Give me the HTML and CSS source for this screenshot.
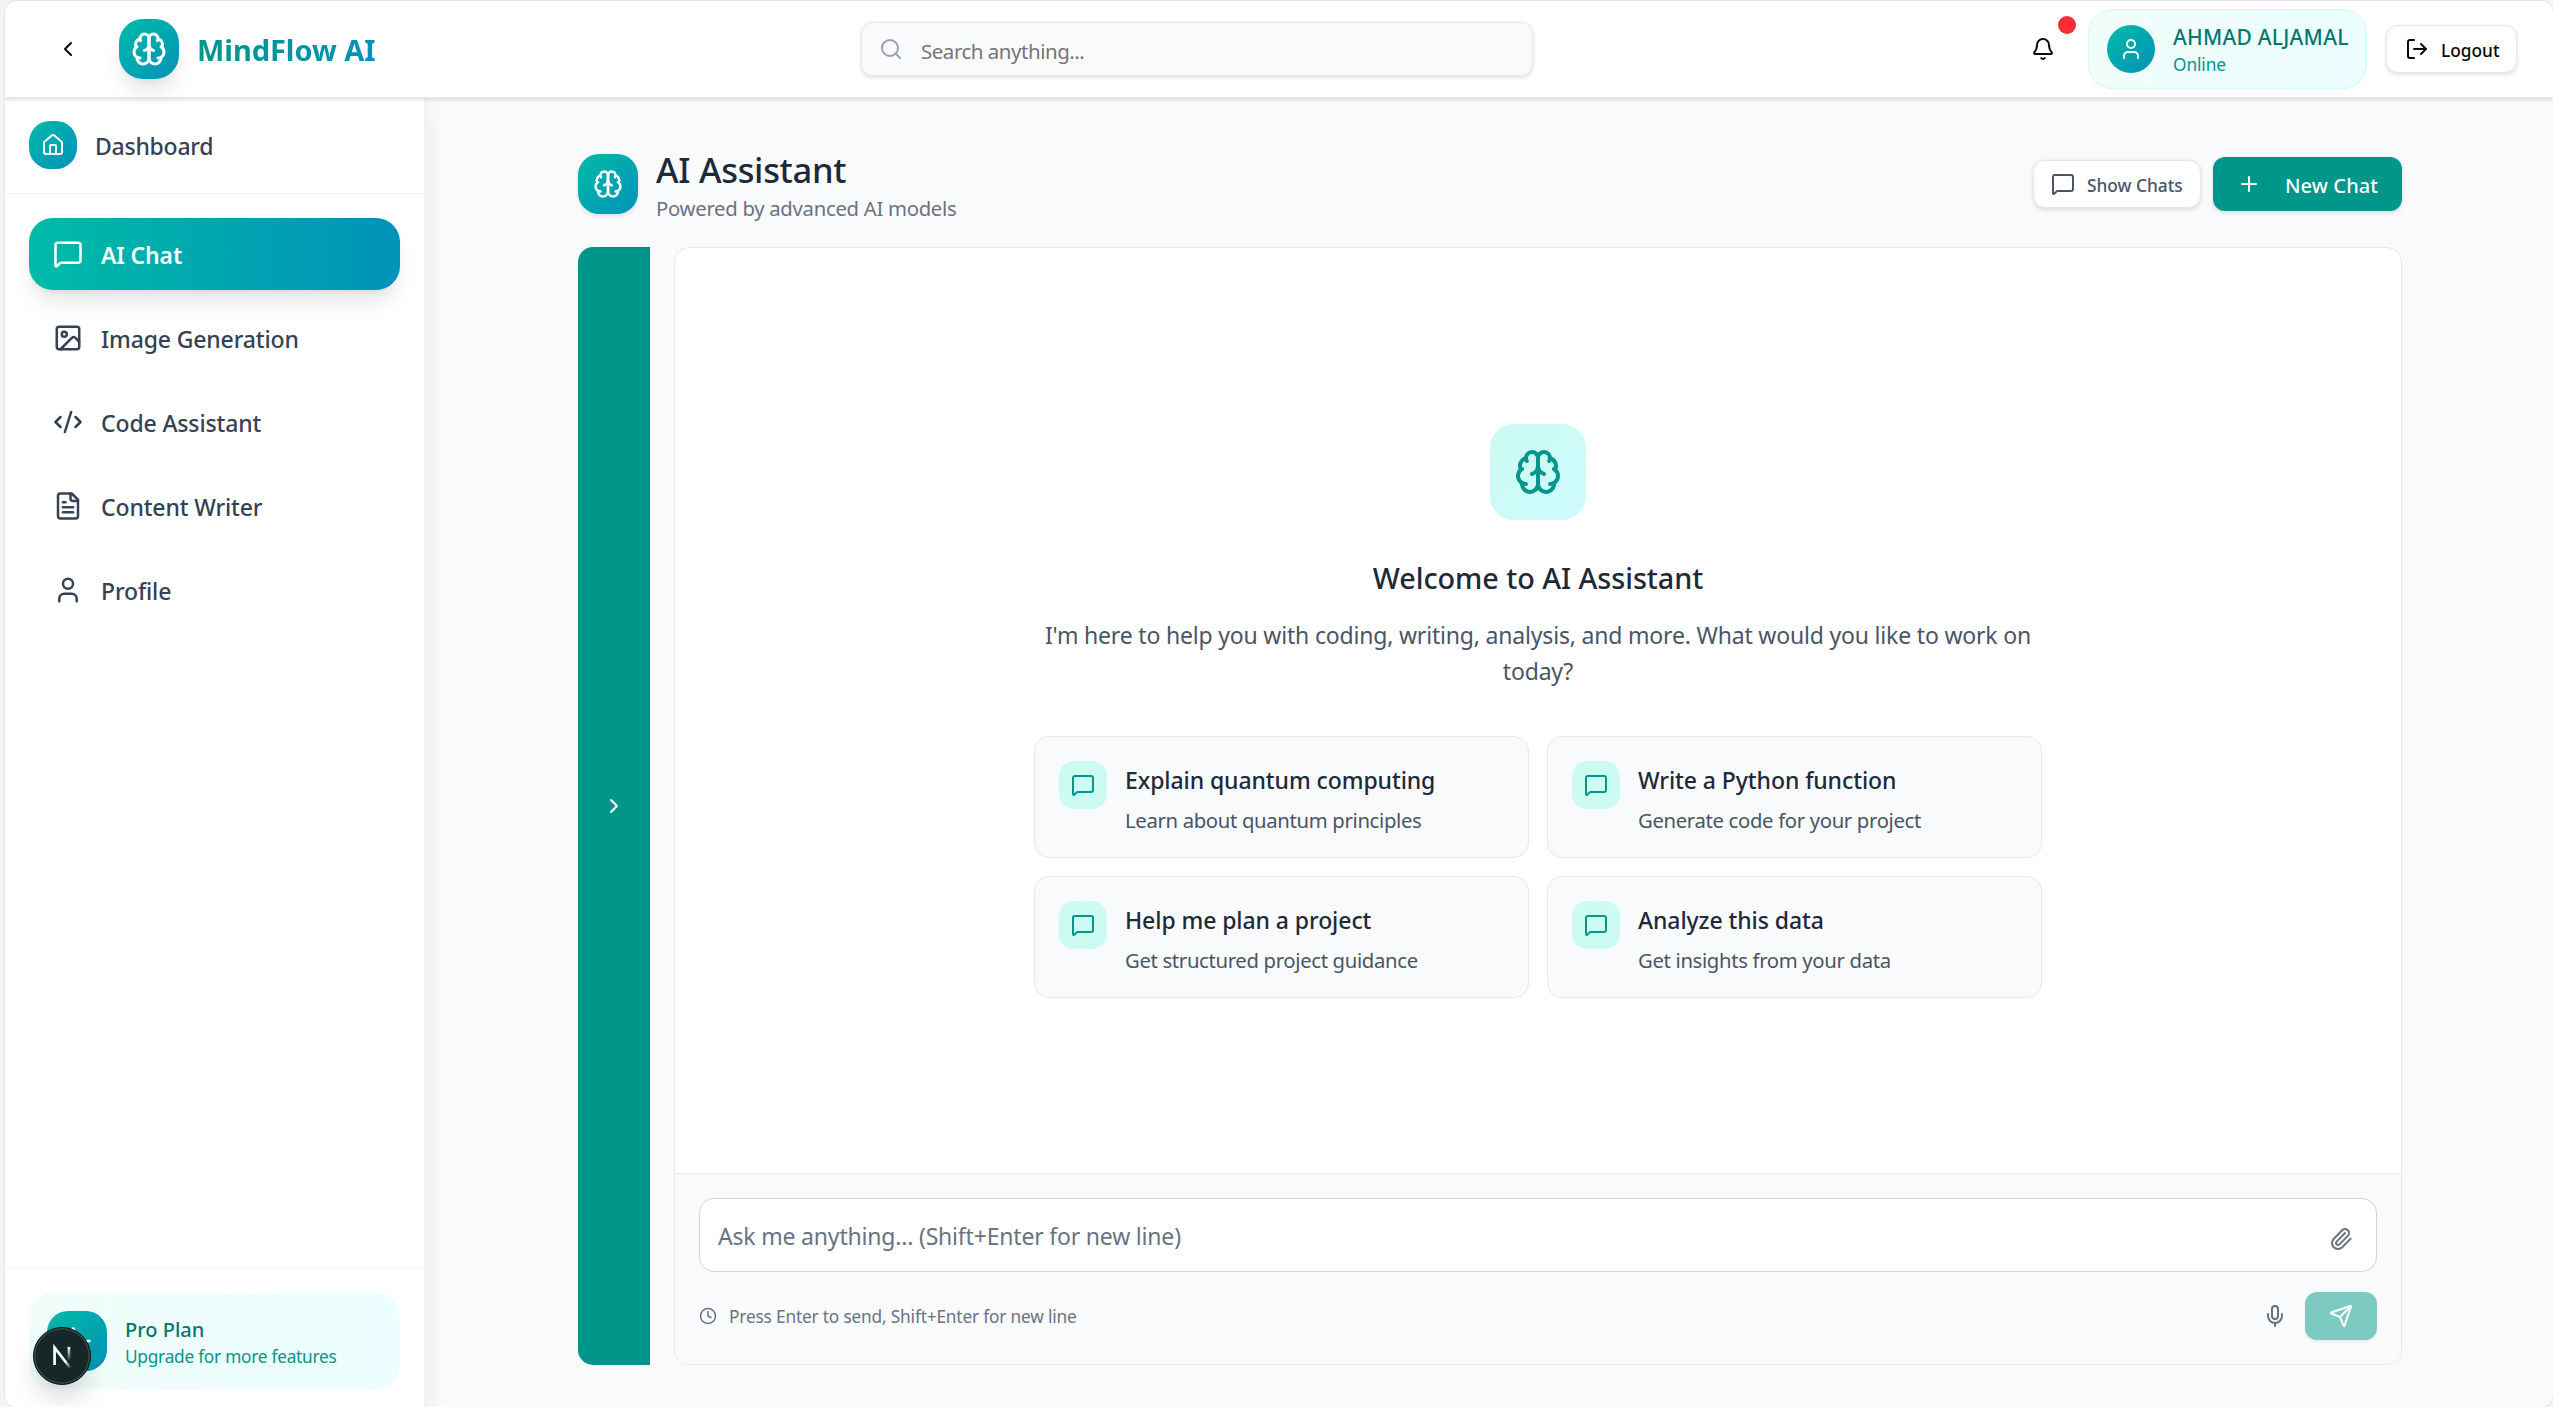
FILE: index.html
```html
<!DOCTYPE html>
<html lang="en">
<head>
<meta charset="utf-8">
<title>MindFlow AI</title>
<link rel="stylesheet" href="styles.css">
</head>
<body>
<svg class="sprite" aria-hidden="true">
  <symbol id="brain" viewBox="0 0 24 24"><path d="M12 5a3 3 0 1 0-5.997.125 4 4 0 0 0-2.526 5.77 4 4 0 0 0 .556 6.588A4 4 0 1 0 12 18Z"/><path d="M12 5a3 3 0 1 1 5.997.125 4 4 0 0 1 2.526 5.77 4 4 0 0 1-.556 6.588A4 4 0 1 1 12 18Z"/><path d="M15 13a4.5 4.5 0 0 1-3-4 4.5 4.5 0 0 1-3 4"/><path d="M17.599 6.5a3 3 0 0 0 .399-1.375"/><path d="M6.003 5.125A3 3 0 0 0 6.401 6.5"/><path d="M3.477 10.896a4 4 0 0 1 .585-.396"/><path d="M19.938 10.5a4 4 0 0 1 .585.396"/><path d="M6 18a4 4 0 0 1-1.967-.516"/><path d="M19.967 17.484A4 4 0 0 1 18 18"/></symbol>
  <symbol id="message" viewBox="0 0 24 24"><path d="M22 17a2 2 0 0 1-2 2H6.828a2 2 0 0 0-1.414.586l-2.202 2.202A.71.71 0 0 1 2 21.286V5a2 2 0 0 1 2-2h16a2 2 0 0 1 2 2z"/></symbol>
  <symbol id="user" viewBox="0 0 24 24"><path d="M19 21v-2a4 4 0 0 0-4-4H9a4 4 0 0 0-4 4v2"/><circle cx="12" cy="7" r="4"/></symbol>
</svg>
<div class="window">
  <header class="topbar">
    <div class="brand">
      <button class="back"><svg class="icon" viewBox="0 0 24 24"><path d="m15 18-6-6 6-6"/></svg></button>
      <span class="logo logo-raised"><svg class="icon icon-xl"><use href="#brain"/></svg></span>
      <span class="brand-name">MindFlow AI</span>
    </div>
    <div class="search">
      <svg class="icon" viewBox="0 0 24 24"><path d="m21 21-4.34-4.34"/><circle cx="11" cy="11" r="8"/></svg>
      <span class="search-text">Search anything...</span>
    </div>
    <div class="account">
      <span class="bell"><svg class="icon" viewBox="0 0 24 24"><path d="M10.268 21a2 2 0 0 0 3.464 0"/><path d="M3.262 15.326A1 1 0 0 0 4 17h16a1 1 0 0 0 .74-1.673C19.41 13.956 18 12.499 18 8A6 6 0 0 0 6 8c0 4.499-1.411 5.956-2.738 7.326"/></svg><i class="dot"></i></span>
      <div class="chip">
        <span class="avatar"><svg class="icon"><use href="#user"/></svg></span>
        <div class="chip-text"><div class="chip-name">AHMAD ALJAMAL</div><div class="chip-status">Online</div></div>
      </div>
      <button class="outline-btn logout"><svg class="icon" viewBox="0 0 24 24"><path d="m16 17 5-5-5-5"/><path d="M21 12H9"/><path d="M9 21H5a2 2 0 0 1-2-2V5a2 2 0 0 1 2-2h4"/></svg><span class="button-label">Logout</span></button>
    </div>
  </header>
  <div class="body">
    <aside class="sidebar">
      <div class="home">
        <span class="home-icon"><svg class="icon" viewBox="0 0 24 24"><path d="M15 21v-8a1 1 0 0 0-1-1h-4a1 1 0 0 0-1 1v8"/><path d="M3 10a2 2 0 0 1 .709-1.528l7-5.999a2 2 0 0 1 2.582 0l7 5.999A2 2 0 0 1 21 10v9a2 2 0 0 1-2 2H5a2 2 0 0 1-2-2z"/></svg></span>
        <span class="label">Dashboard</span>
      </div>
      <nav class="nav">
        <a class="nav-item active"><svg class="icon icon-lg"><use href="#message"/></svg><span class="label">AI Chat</span></a>
        <a class="nav-item"><svg class="icon icon-lg" viewBox="0 0 24 24"><rect width="18" height="18" x="3" y="3" rx="2"/><circle cx="9" cy="9" r="2"/><path d="m21 15-3.086-3.086a2 2 0 0 0-2.828 0L6 21"/></svg><span class="label">Image Generation</span></a>
        <a class="nav-item"><svg class="icon icon-lg" viewBox="0 0 24 24"><path d="m18 16 4-4-4-4"/><path d="m6 8-4 4 4 4"/><path d="m14.5 4-5 16"/></svg><span class="label">Code Assistant</span></a>
        <a class="nav-item"><svg class="icon icon-lg" viewBox="0 0 24 24"><path d="M15 2H6a2 2 0 0 0-2 2v16a2 2 0 0 0 2 2h12a2 2 0 0 0 2-2V7Z"/><path d="M14 2v4a2 2 0 0 0 2 2h4"/><path d="M10 9H8"/><path d="M16 13H8"/><path d="M16 17H8"/></svg><span class="label">Content Writer</span></a>
        <a class="nav-item"><svg class="icon icon-lg"><use href="#user"/></svg><span class="label">Profile</span></a>
      </nav>
      <div class="plan-area">
        <div class="plan">
          <span class="logo"><svg class="icon icon-lg" viewBox="0 0 24 24"><path d="M22 12h-2.48a2 2 0 0 0-1.93 1.46l-2.35 8.36a.25.25 0 0 1-.48 0L9.24 2.18a.25.25 0 0 0-.48 0l-2.35 8.36A2 2 0 0 1 4.49 12H2"/></svg></span>
          <div class="plan-text"><div class="plan-name">Pro Plan</div><div class="plan-note">Upgrade for more features</div></div>
        </div>
      </div>
    </aside>
    <main class="main">
      <div class="page-head">
        <span class="logo logo-flat"><svg class="icon icon-lg"><use href="#brain"/></svg></span>
        <div class="titles"><h1>AI Assistant</h1><p>Powered by advanced AI models</p></div>
        <button class="outline-btn show"><svg class="icon"><use href="#message"/></svg><span class="button-label">Show Chats</span></button>
        <button class="new"><svg class="icon" viewBox="0 0 24 24"><path d="M5 12h14"/><path d="M12 5v14"/></svg><span class="button-label">New Chat</span></button>
      </div>
      <div class="workspace">
        <div class="drawer"><svg class="icon" viewBox="0 0 24 24"><path d="m9 18 6-6-6-6"/></svg></div>
        <section class="chat">
          <div class="welcome">
            <span class="hero"><svg class="icon icon-2xl"><use href="#brain"/></svg></span>
            <h2>Welcome to AI Assistant</h2>
            <p class="intro">I'm here to help you with coding, writing, analysis, and more. What would you like to work on<br>today?</p>
            <div class="prompts">
              <div class="prompt"><span class="prompt-icon"><svg class="icon"><use href="#message"/></svg></span><div class="prompt-text"><h3>Explain quantum computing</h3><p>Learn about quantum principles</p></div></div>
              <div class="prompt"><span class="prompt-icon"><svg class="icon"><use href="#message"/></svg></span><div class="prompt-text"><h3>Write a Python function</h3><p>Generate code for your project</p></div></div>
              <div class="prompt"><span class="prompt-icon"><svg class="icon"><use href="#message"/></svg></span><div class="prompt-text"><h3>Help me plan a project</h3><p>Get structured project guidance</p></div></div>
              <div class="prompt"><span class="prompt-icon"><svg class="icon"><use href="#message"/></svg></span><div class="prompt-text"><h3>Analyze this data</h3><p>Get insights from your data</p></div></div>
            </div>
          </div>
          <div class="composer">
            <div class="field"><span class="field-text">Ask me anything... (Shift+Enter for new line)</span>
              <svg class="icon clip" viewBox="0 0 24 24"><path d="m16 6-8.414 8.586a2 2 0 0 0 2.829 2.829l8.414-8.586a4 4 0 1 0-5.657-5.657l-8.379 8.551a6 6 0 1 0 8.485 8.485l8.379-8.551"/></svg></div>
            <div class="actions">
              <svg class="icon icon-sm" viewBox="0 0 24 24"><circle cx="12" cy="12" r="10"/><path d="M12 6v6l4 2"/></svg>
              <span class="hint">Press Enter to send, Shift+Enter for new line</span>
              <svg class="icon mic" viewBox="0 0 24 24"><path d="M12 19v3"/><path d="M19 10v2a7 7 0 0 1-14 0v-2"/><rect x="9" y="2" width="6" height="13" rx="3"/></svg>
              <button class="send"><svg class="icon" viewBox="0 0 24 24"><path d="M14.536 21.686a.5.5 0 0 0 .937-.024l6.5-19a.496.496 0 0 0-.635-.635l-19 6.5a.5.5 0 0 0-.024.937l7.93 3.18a2 2 0 0 1 1.112 1.11z"/><path d="m21.854 2.147-10.94 10.939"/></svg></button>
            </div>
          </div>
        </section>
      </div>
    </main>
  </div>
  <div class="dev-badge"><svg viewBox="0 0 40 40"><defs><linearGradient id="fadeA" gradientUnits="userSpaceOnUse" x1="13" y1="13" x2="26" y2="29"><stop offset=".7" stop-color="#fff"/><stop offset="1" stop-color="#fff" stop-opacity="0"/></linearGradient><linearGradient id="fadeB" x1="0" y1="0" x2="0" y2="1"><stop offset="0" stop-color="#fff"/><stop offset="1" stop-color="#fff" stop-opacity="0"/></linearGradient></defs><path d="M14.7 26.5V14L26 28.6" fill="none" stroke="url(#fadeA)" stroke-width="1.9"/><rect x="24" y="13.5" width="1.9" height="10" fill="url(#fadeB)"/></svg></div>
</div>
</body>
</html>
```
FILE: styles.css
```css
* { box-sizing: border-box; margin: 0; padding: 0; }
body { background: #f4f4f5; font-family: "Noto Sans", "Open Sans", sans-serif; font-size: 23px; line-height: 36px; color: #364153; overflow: hidden; }
button { font: inherit; border: 0; background: none; }
h1, h2, h3 { font-weight: 500; color: #1e2939; }
.sprite { display: none; }
.icon { width: 24px; height: 24px; flex: none; fill: none; stroke: currentColor; stroke-width: 2; stroke-linecap: round; stroke-linejoin: round; }
.icon-sm { width: 18px; height: 18px; }
.icon-lg { width: 30px; height: 30px; }
.icon-xl { width: 36px; height: 36px; }
.icon-2xl { width: 48px; height: 48px; }

.window { position: relative; display: flex; flex-direction: column; height: 1406px; margin: 1px 0 0 5px; background: #f9fafb; border-radius: 12px; overflow: hidden; box-shadow: 0 0 0 1px #e4e4e6; }

.topbar { position: relative; z-index: 2; display: grid; grid-template-columns: 856px 672px 1fr; align-items: center; height: 97px; background: #fff; border-bottom: 1px solid #e5e7eb; box-shadow: 0 1.5px 4px rgba(0,0,0,.12); }
.brand { display: flex; align-items: center; padding-left: 51px; }
.back { display: flex; color: #0a0a0a; margin-right: 39px; }
.logo { display: grid; place-items: center; flex: none; width: 60px; height: 60px; border-radius: 21px; color: #fff; background: linear-gradient(135deg, #00bba7, #0092b8); }
.logo-raised { border-radius: 24px; box-shadow: 0 15px 22px -4px rgba(0,0,0,.1), 0 6px 9px -6px rgba(0,0,0,.1); }
.logo-flat { box-shadow: 0 1.5px 4px rgba(0,0,0,.12); }
.brand-name { margin-left: 18px; padding-top: 2px; font-size: 29px; font-weight: 700; letter-spacing: -.06px; background: linear-gradient(90deg, #009689, #0092b8); background-clip: text; -webkit-background-clip: text; color: transparent; }
.search { display: flex; align-items: center; gap: 18px; height: 54px; padding: 0 17px; background: #f9fafb; border: 1px solid #e5e7eb; border-radius: 12px; box-shadow: 0 1.5px 4px rgba(0,0,0,.12); color: #99a1af; font-size: 20.5px; }
.search-text { padding-top: 3px; color: #757575; letter-spacing: -.48px; }
.account { display: flex; align-items: center; justify-content: flex-end; padding-right: 36px; }
.bell { position: relative; display: flex; margin-right: 33px; color: #0a0a0a; }
.dot { position: absolute; left: 27px; top: -21px; width: 18px; height: 18px; border-radius: 50%; background: #fb2c36; }
.chip { display: flex; align-items: center; gap: 18px; width: 279px; height: 80px; padding-left: 18px; margin-right: 19px; border: 1px solid #cbfbf1; border-radius: 24px; background: linear-gradient(90deg, #f0fdfa, #ecfeff); }
.avatar { display: grid; place-items: center; width: 48px; height: 48px; border-radius: 50%; color: #fff; background: linear-gradient(135deg, #00bba7, #0092b8); }
.chip-text { padding-top: 4px; white-space: nowrap; }
.chip-name { font-size: 21px; line-height: 27px; font-weight: 500; letter-spacing: .25px; color: #00786f; }
.chip-status { font-size: 17.3px; line-height: 28px; letter-spacing: -.1px; color: #009689; }
.outline-btn { display: flex; align-items: center; height: 48px; border: 1px solid #e5e7eb; border-radius: 12px; background: #fff; box-shadow: 0 1.5px 4px rgba(0,0,0,.12); font-size: 17.3px; font-weight: 500; white-space: nowrap; }
.logout { width: 131px; padding-left: 18px; gap: 12px; color: #0a0a0a; }
.button-label { padding-top: 3px; }

.body { display: flex; flex: 1; min-height: 0; margin-top: -1px; }
.sidebar { display: flex; flex-direction: column; width: 420px; flex: none; background: #fff; border-right: 1px solid #f3f4f6; box-shadow: 0 12px 24px rgba(0,0,0,.08); white-space: nowrap; }
.home { display: flex; align-items: center; gap: 18px; height: 97px; padding: 0 24px; border-bottom: 1px solid #f3f4f6; font-weight: 500; letter-spacing: -.25px; }
.home-icon { display: grid; place-items: center; width: 48px; height: 48px; border-radius: 21px; color: #fff; background: linear-gradient(135deg, #00bba7, #0092b8); }
.label { padding-top: 2px; }
.nav { display: flex; flex-direction: column; gap: 12px; flex: 1; padding: 24px; }
.nav-item { display: flex; align-items: center; gap: 18px; height: 72px; padding: 0 24px; border-radius: 24px; font-weight: 500; letter-spacing: -.14px; }
.active { color: #fff; font-weight: 600; background: linear-gradient(90deg, #00bba7, #0092b8); box-shadow: 0 15px 22px -4px rgba(0,0,0,.1), 0 6px 9px -6px rgba(0,0,0,.1); }
.plan-area { padding: 24px 24px 18px; border-top: 1px solid #f3f4f6; }
.plan { display: flex; align-items: center; gap: 18px; height: 96px; padding: 0 18px; border-radius: 24px; background: linear-gradient(90deg, #f0fdfa, #ecfeff); }
.plan-text { padding-top: 2px; }
.plan-name { font-size: 20px; line-height: 30px; font-weight: 500; color: #00786f; }
.plan-note { font-size: 17.3px; line-height: 24px; letter-spacing: -.26px; color: #009689; }

.main { width: 1824px; margin-left: 153px; padding-top: 50px; }
.page-head { display: flex; align-items: center; height: 74px; margin-bottom: 26px; white-space: nowrap; }
.titles { margin-left: 18px; margin-right: auto; padding-top: 3px; }
h1 { font-size: 34.5px; line-height: 46px; letter-spacing: -.3px; }
.titles p { font-size: 20.3px; line-height: 31px; letter-spacing: -.28px; color: #6a7282; }
.show { width: 168px; margin-right: 12px; padding-left: 17px; gap: 12px; color: #4a5565; }
.new { display: flex; align-items: center; width: 189px; height: 54px; padding-left: 24px; gap: 24px; border-radius: 12px; background: #009689; color: #fff; font-size: 20px; font-weight: 500; letter-spacing: .1px; box-shadow: 0 1.5px 4px rgba(0,0,0,.12); }
.workspace { display: flex; gap: 24px; height: 1118px; }
.drawer { display: grid; place-items: center; width: 72px; border-radius: 15px 0 0 15px; background: #009689; color: #fff; }
.chat { display: flex; flex-direction: column; flex: 1; border: 1px solid #e5e7eb; border-radius: 15px; background: #fff; overflow: hidden; }
.welcome { display: flex; flex-direction: column; align-items: center; justify-content: center; flex: 1; text-align: center; }
.hero { display: grid; place-items: center; width: 96px; height: 96px; border-radius: 24px; background: linear-gradient(135deg, #cbfbf1, #cefafe); color: #009689; }
h2 { margin: 37px 0 18px; font-size: 28.8px; line-height: 42px; letter-spacing: -.06px; }
.intro { width: 1008px; letter-spacing: -.185px; color: #4a5565; white-space: nowrap; }
.prompts { display: grid; grid-template-columns: 495px 495px; gap: 18px; margin-top: 47px; text-align: left; }
.prompt { display: flex; gap: 18px; height: 122px; padding: 24px; border: 1px solid #e5e7eb; border-radius: 15px; background: #f9fafb; white-space: nowrap; }
.prompt-icon { display: grid; place-items: center; width: 48px; height: 48px; border-radius: 15px; background: #cbfbf1; color: #009689; }
.prompt-text { padding-top: 1px; }
h3 { font-size: 23px; line-height: 36px; margin-bottom: 7px; letter-spacing: -.08px; }
.prompt p { font-size: 20.3px; line-height: 30px; letter-spacing: -.33px; color: #4a5565; }
.composer { height: 191px; padding: 24px; border-top: 1px solid #e5e7eb; background: #f9fafb; color: #6a7282; }
.field { display: flex; align-items: center; justify-content: space-between; height: 74px; padding: 0 23px 0 18px; border: 1px solid #d1d5dc; border-radius: 15px; background: #fff; }
.field-text { padding-top: 2px; letter-spacing: -.19px; }
.clip { margin-top: 8px; }
.actions { display: flex; align-items: center; height: 48px; margin-top: 20px; }
.hint { margin-left: 12px; margin-right: auto; padding-top: 2px; font-size: 17.3px; letter-spacing: -.18px; }
.mic { margin-right: 18px; }
.send { display: grid; place-items: center; width: 72px; height: 48px; border-radius: 12px; background: #7dcac3; color: #fff; box-shadow: 0 1.5px 3px rgba(0,0,0,.06); }
.dev-badge { position: absolute; left: 28px; top: 1326px; width: 58px; height: 58px; border-radius: 50%; background: #152827; border: 1px solid #0b1514; box-shadow: inset 0 0 0 1.5px #3a4a49, 0 16px 32px -8px rgba(0,0,0,.24); }
.dev-badge svg { display: block; width: 56px; height: 56px; }
```
